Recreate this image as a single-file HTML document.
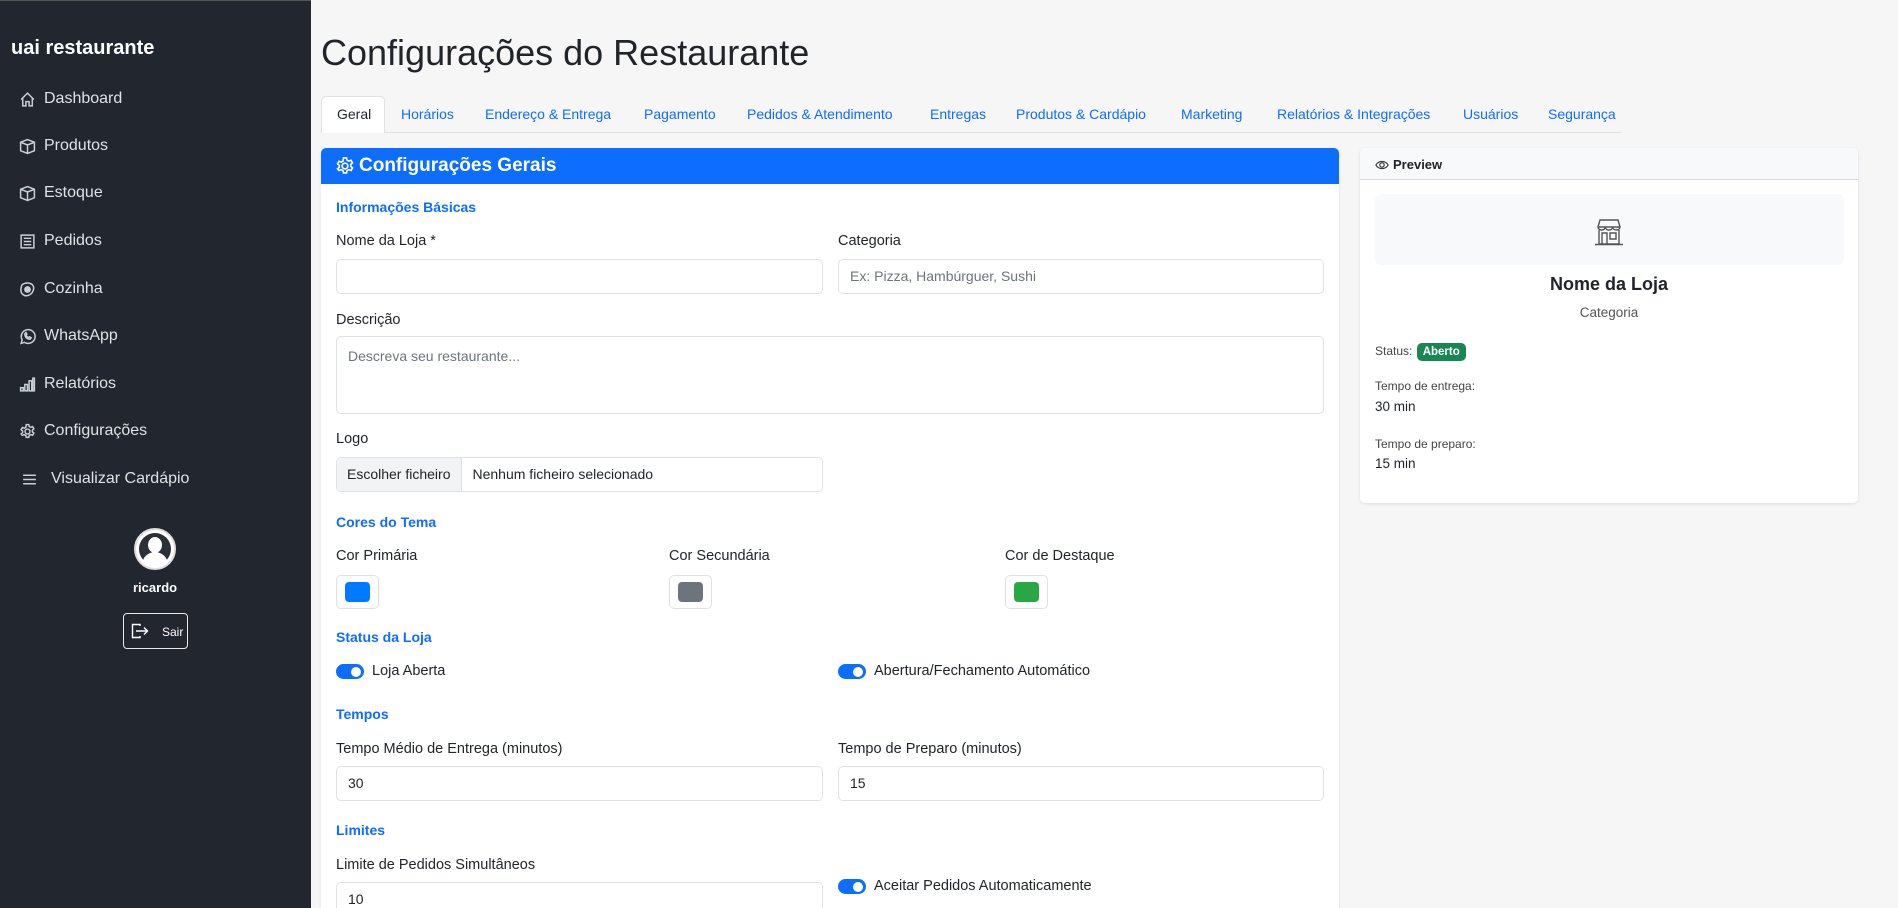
<!DOCTYPE html>
<html><head><meta charset="utf-8"><style>
*{box-sizing:border-box;margin:0;padding:0}
html,body{width:1898px;height:908px;overflow:hidden}
body{background:#f6f6f7;font-family:"Liberation Sans",Arial,sans-serif;color:#212529;position:relative}
.a{position:absolute;white-space:nowrap}
#sb{position:absolute;left:0;top:0;width:311px;height:908px;background:#22262e;border-top:1px solid #555}
.mi{position:absolute;left:19px;color:#dee2e6;font-size:16px;display:flex;align-items:center}
.mi svg{width:17px;height:17px;margin-right:8px;stroke:#c8d0d8;fill:none;stroke-width:1.4}
.tab{position:absolute;top:106px;font-size:14px;color:#0d6efd}
.sec{position:absolute;left:336px;font-size:14px;font-weight:bold;color:#0d6efd}
.lbl{position:absolute;font-size:14.5px;color:#212529}
.inp{position:absolute;height:35px;background:#fff;border:1px solid #dee2e6;border-radius:5px;font-size:14px;padding:0 11px;line-height:33px;color:#212529}
.ph{color:#6c757d}
.sw{position:absolute;width:43px;height:34px;border:1px solid #dee2e6;border-radius:5px;background:#fff;padding:6px 8px}
.sw div{width:100%;height:100%;border-radius:4px}
.tg{position:absolute;width:28px;height:15px;border-radius:8px;background:#0d6efd}
.tg:after{content:"";position:absolute;right:3px;top:2.5px;width:10px;height:10px;border-radius:50%;background:#fff}
</style></head><body>
<div id="sb">
<div class="a" style="left:11px;top:36px;font-size:20px;font-weight:bold;color:#fff">uai restaurante</div>
<div class="mi" style="top:89px"><svg viewBox="0 0 16 16"><path d="M2 8 8 2l6 6M3.5 6.5V14h3v-4h3v4h3V6.5"/></svg>Dashboard</div>
<div class="mi" style="top:136px"><svg viewBox="0 0 16 16"><path d="M8 1.5 14.5 4v8L8 14.5 1.5 12V4zM1.5 4 8 6.5 14.5 4M8 6.5v8"/></svg>Produtos</div>
<div class="mi" style="top:183px"><svg viewBox="0 0 16 16"><path d="M8 1.5 14.5 4v8L8 14.5 1.5 12V4zM1.5 4 8 6.5 14.5 4M8 6.5v8"/></svg>Estoque</div>
<div class="mi" style="top:231px"><svg viewBox="0 0 16 16"><rect x="2" y="2" width="12" height="12"/><path d="M4.5 5h7M4.5 8h7M4.5 11h7"/></svg>Pedidos</div>
<div class="mi" style="top:279px"><svg viewBox="0 0 16 16"><path d="M3 3.5C6 1 11 1.5 13 4c2 3 0 8-4 9.5C5 15 1.5 12 1.8 8 2 6 2.3 4.5 3 3.5z"/><circle cx="8" cy="8" r="2.5" fill="#c8d0d8"/></svg>Cozinha</div>
<div class="mi" style="top:326px"><svg viewBox="0 0 16 16"><path d="M2 14.5l1-3.3A6.5 6.5 0 1 1 5.2 13.5z"/><path d="M5.5 5.5c0 3 2 5 5 5l1-1.3-1.7-.9-.8.8c-1-.4-2-1.4-2.4-2.4l.8-.8-.9-1.7z"/></svg>WhatsApp</div>
<div class="mi" style="top:374px"><svg viewBox="0 0 16 16"><rect x="1.5" y="11" width="2.5" height="3"/><rect x="5.5" y="8" width="2.5" height="6"/><rect x="9.5" y="4.5" width="2.5" height="9.5"/><rect x="13" y="2" width="1.5" height="12"/></svg>Relatórios</div>
<div class="mi" style="top:421px"><svg viewBox="0 0 16 16"><circle cx="8" cy="8" r="2.3"/><path d="M6.8 1.5h2.4l.4 1.8 1.5.8 1.7-.7 1.2 2.1-1.4 1.2v1.6l1.4 1.2-1.2 2.1-1.7-.7-1.5.8-.4 1.8H6.8l-.4-1.8-1.5-.8-1.7.7L2 10.3l1.4-1.2V7.5L2 6.3l1.2-2.1 1.7.7 1.5-.8z"/></svg>Configurações</div>
<div class="mi" style="top:469px;left:21px"><svg viewBox="0 0 16 16" style="margin-right:13px"><path d="M2 4h12M2 8h12M2 12h12"/></svg>Visualizar Cardápio</div>
<div class="a" style="left:134px;top:527px;width:42px;height:42px;border-radius:50%;background:#fff;overflow:hidden;border:2px solid #ddd">
<div style="position:absolute;left:3px;top:3px;width:32px;height:32px;border-radius:50%;background:#2b2f36"></div>
<div style="position:absolute;left:12px;top:7px;width:14px;height:16px;border-radius:50%;background:#fff"></div>
<div style="position:absolute;left:6px;top:22px;width:26px;height:20px;border-radius:13px 13px 0 0;background:#fff"></div>
</div>
<div class="a" style="left:133px;top:579px;font-size:13px;font-weight:bold;color:#fff">ricardo</div>
<div class="a" style="left:123px;top:612px;width:65px;height:36px;border:1px solid #e8e8e8;border-radius:4px;color:#fff;font-size:12px;padding:11px 0 0 38px">Sair
<svg style="position:absolute;left:7px;top:9px" width="20" height="16" viewBox="0 0 20 16" fill="none" stroke="#fff" stroke-width="1.4"><path d="M9 3V1.5H1.5v13H9V13M5 8h11M13 4.5 16.5 8 13 11.5"/></svg></div>
</div>

<div class="a" style="left:321px;top:32px;font-size:36px;color:#212529">Configurações do Restaurante</div>
<div class="a" style="top:132px;height:1px;background:#dee2e6;left:321px;width:1300px"></div>
<div class="a" style="left:321px;top:96px;width:64px;height:37px;background:#fff;border:1px solid #dee2e6;border-bottom:none;border-radius:5px 5px 0 0"></div>
<div class="tab" style="left:337px;color:#212529">Geral</div>
<div class="tab" style="left:401px">Horários</div>
<div class="tab" style="left:485px">Endereço &amp; Entrega</div>
<div class="tab" style="left:644px">Pagamento</div>
<div class="tab" style="left:747px">Pedidos &amp; Atendimento</div>
<div class="tab" style="left:930px">Entregas</div>
<div class="tab" style="left:1016px">Produtos &amp; Cardápio</div>
<div class="tab" style="left:1181px">Marketing</div>
<div class="tab" style="left:1277px">Relatórios &amp; Integrações</div>
<div class="tab" style="left:1463px">Usuários</div>
<div class="tab" style="left:1548px">Segurança</div>

<div class="a" style="left:321px;top:148px;width:1018px;height:770px;background:#fff;border-radius:5px;box-shadow:0 1px 3px rgba(0,0,0,.08)"></div>
<div class="a" style="left:321px;top:148px;width:1018px;height:36px;background:#0d6efd;border-radius:5px 5px 0 0;color:#fff;font-size:19px;font-weight:bold;padding:7px 0 0 38px">Configurações Gerais
<svg style="position:absolute;left:14px;top:8px" width="20" height="20" viewBox="0 0 16 16" fill="none" stroke="#fff" stroke-width="1.3"><circle cx="8" cy="8" r="2.3"/><path d="M6.8 1.5h2.4l.4 1.8 1.5.8 1.7-.7 1.2 2.1-1.4 1.2v1.6l1.4 1.2-1.2 2.1-1.7-.7-1.5.8-.4 1.8H6.8l-.4-1.8-1.5-.8-1.7.7L2 10.3l1.4-1.2V7.5L2 6.3l1.2-2.1 1.7.7 1.5-.8z"/></svg></div>

<div class="sec" style="top:199px">Informações Básicas</div>
<div class="lbl" style="left:336px;top:233px">Nome da Loja *</div>
<div class="lbl" style="left:838px;top:233px">Categoria</div>
<div class="inp" style="left:336px;top:259px;width:487px"></div>
<div class="inp ph" style="left:838px;top:259px;width:486px"><span class="ph">Ex: Pizza, Hambúrguer, Sushi</span></div>
<div class="lbl" style="left:336px;top:312px">Descrição</div>
<div class="inp" style="left:336px;top:336px;width:988px;height:78px;line-height:20px;padding-top:9px"><span class="ph">Descreva seu restaurante...</span></div>
<div class="lbl" style="left:336px;top:431px">Logo</div>
<div class="inp" style="left:336px;top:457px;width:487px;padding:0"><span style="display:inline-block;background:#f1f3f5;border-right:1px solid #dee2e6;padding:0 10px;height:33px;border-radius:5px 0 0 5px">Escolher ficheiro</span><span style="padding-left:11px">Nenhum ficheiro selecionado</span></div>

<div class="sec" style="top:514px">Cores do Tema</div>
<div class="lbl" style="left:336px;top:548px">Cor Primária</div>
<div class="lbl" style="left:669px;top:548px">Cor Secundária</div>
<div class="lbl" style="left:1005px;top:548px">Cor de Destaque</div>
<div class="sw" style="left:336px;top:575px"><div style="background:#007bff"></div></div>
<div class="sw" style="left:669px;top:575px"><div style="background:#6c757d"></div></div>
<div class="sw" style="left:1005px;top:575px"><div style="background:#28a745"></div></div>

<div class="sec" style="top:629px">Status da Loja</div>
<div class="tg" style="left:336px;top:664px"></div>
<div class="lbl" style="left:372px;top:663px">Loja Aberta</div>
<div class="tg" style="left:838px;top:664px"></div>
<div class="lbl" style="left:874px;top:663px">Abertura/Fechamento Automático</div>

<div class="sec" style="top:706px">Tempos</div>
<div class="lbl" style="left:336px;top:741px">Tempo Médio de Entrega (minutos)</div>
<div class="lbl" style="left:838px;top:741px">Tempo de Preparo (minutos)</div>
<div class="inp" style="left:336px;top:766px;width:487px">30</div>
<div class="inp" style="left:838px;top:766px;width:486px">15</div>

<div class="sec" style="top:822px">Limites</div>
<div class="lbl" style="left:336px;top:857px">Limite de Pedidos Simultâneos</div>
<div class="inp" style="left:336px;top:882px;width:487px">10</div>
<div class="tg" style="left:838px;top:879px"></div>
<div class="lbl" style="left:874px;top:878px">Aceitar Pedidos Automaticamente</div>

<div class="a" style="left:1360px;top:148px;width:498px;height:355px;background:#fff;border-radius:5px;box-shadow:0 1px 3px rgba(0,0,0,.1);overflow:hidden">
<div style="height:32px;background:#f8f9fa;border-bottom:1px solid #d5d7da;font-size:13px;font-weight:bold;padding:9px 0 0 33px;position:relative">Preview
<svg style="position:absolute;left:15px;top:11px" width="14" height="12" viewBox="0 0 16 12" fill="none" stroke="#333" stroke-width="1.3"><path d="M1 6c3-5.5 11-5.5 14 0-3 5.5-11 5.5-14 0z"/><circle cx="8" cy="6" r="2.5"/></svg></div>
<div style="position:absolute;left:15px;top:46px;width:469px;height:71px;background:#f8f9fa;border-radius:6px"></div>
<svg style="position:absolute;left:234px;top:70px" width="30" height="28" viewBox="0 0 30 28" fill="none" stroke="#555" stroke-width="1.4"><path d="M4 9 6 2h18l2 7M4 9c0 2 2 3 3.7 3s3.6-1 3.6-3c0 2 1.9 3 3.7 3s3.7-1 3.7-3c0 2 1.8 3 3.6 3S26 11 26 9zM5 12v14h20V12M1 26.5h28M8 26V15h5v11M16 15h6v6h-6z"/></svg>
<div style="position:absolute;left:0;width:498px;top:126px;text-align:center;font-size:18px;font-weight:bold;color:#212529">Nome da Loja</div>
<div style="position:absolute;left:0;width:498px;top:157px;text-align:center;font-size:13.5px;color:#555">Categoria</div>
<div style="position:absolute;left:15px;top:195px;font-size:12px;color:#444">Status: <span style="display:inline-block;background:#198754;color:#fff;font-weight:bold;font-size:11.5px;padding:3px 6px;border-radius:5px;margin-left:1px">Aberto</span></div>
<div style="position:absolute;left:15px;top:231px;font-size:12px;color:#444">Tempo de entrega:</div>
<div style="position:absolute;left:15px;top:251px;font-size:13.5px">30 min</div>
<div style="position:absolute;left:15px;top:289px;font-size:12px;color:#444">Tempo de preparo:</div>
<div style="position:absolute;left:15px;top:308px;font-size:13.5px">15 min</div>
</div>
</body></html>
